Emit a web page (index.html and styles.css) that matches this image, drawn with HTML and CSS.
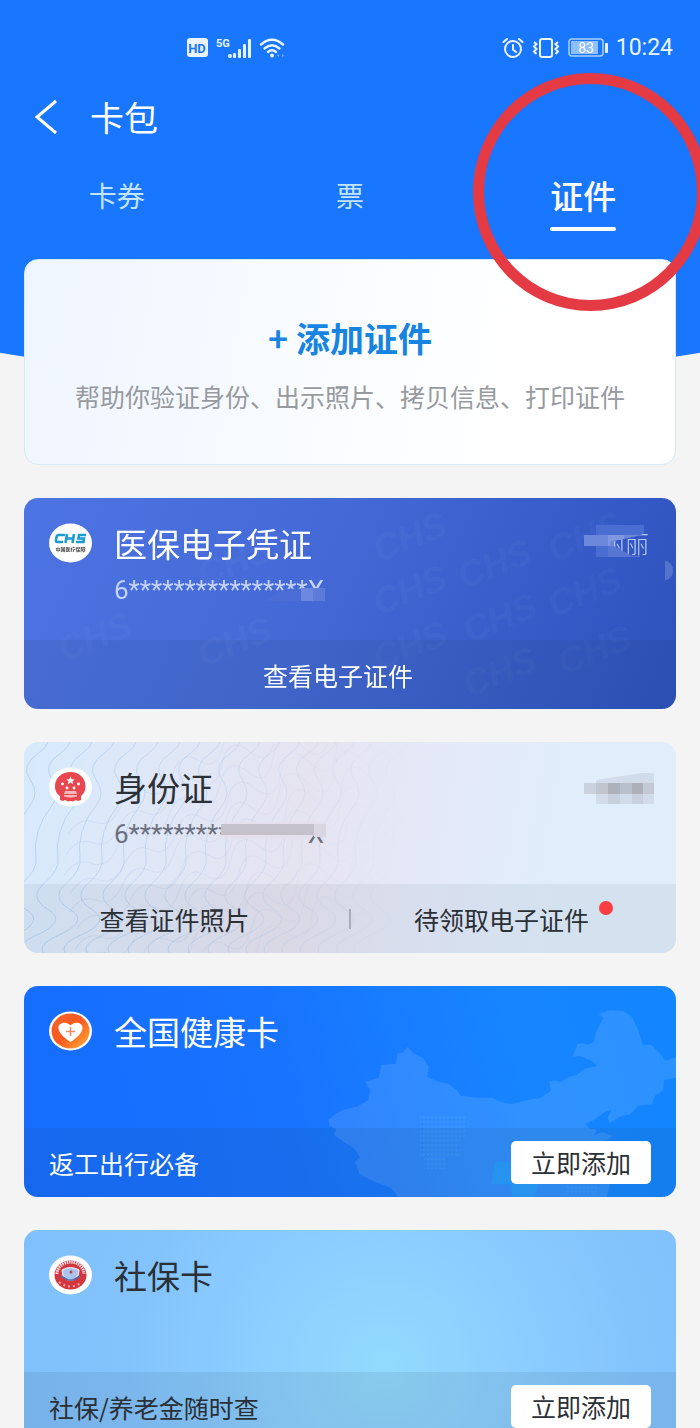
FILE: index.html
```html
<!DOCTYPE html>
<html lang="zh-CN">
<head>
    <meta charset="UTF-8">
    <meta name="viewport" content="width=device-width, initial-scale=1.0">
    <title>卡包</title>
    <link rel="stylesheet" href="styles.css">
</head>
<body>
<div class="page">

    <!-- Status bar -->
    <div class="status-bar">
        <div class="status-group">
            <svg width="22" height="20" viewBox="0 0 22 20">
                <rect x="0" y="0" width="21" height="19" rx="3" fill="#eaf4ff"/>
                <text x="10" y="15" class="hd-text" text-anchor="middle">HD</text>
            </svg>
            <svg width="36" height="22" viewBox="0 0 36 22">
                <text x="0" y="10" class="net-text">5G</text>
                <g fill="#e4f1ff">
                    <circle cx="14" cy="19" r="2"/>
                    <rect x="17" y="16" width="3" height="5" rx="1"/>
                    <rect x="22" y="12" width="3" height="9" rx="1"/>
                    <rect x="27" y="7" width="3" height="14" rx="1"/>
                    <rect x="32" y="2" width="3" height="19" rx="1"/>
                </g>
            </svg>
            <svg width="28" height="22" viewBox="0 0 28 22" fill="none" stroke="#eaf4ff" stroke-width="2.4" stroke-linecap="round">
                <path d="M2 7.500Q13 -2 24 7.500"/>
                <path d="M5.500 11.500Q13 5 20.500 11.500"/>
                <path d="M9 15Q13 11.500 17 15"/>
                <circle cx="13" cy="18.500" r="2" fill="#eaf4ff" stroke="none"/>
                <path d="M20 17l-2 1.500 2 1.500zM23 17l2 1.500-2 1.500z" fill="#7db5ff" stroke="none"/>
            </svg>
        </div>
        <div class="status-group">
            <svg width="22" height="22" viewBox="0 0 22 22" fill="none" stroke="#eaf4ff" stroke-width="2" stroke-linecap="round">
                <circle cx="11" cy="12" r="8"/>
                <path d="M11 8v4.500l3 2.500M1.500 5L5 2M20.500 5L17 2"/>
            </svg>
            <svg width="30" height="22" viewBox="0 0 30 22" fill="none" stroke="#eaf4ff" stroke-width="2">
                <rect x="9" y="2" width="12" height="18" rx="2"/>
                <path d="M3 5l2.500 2L3 9.500 5.500 12 3 14.500 5.500 17M27 5l-2.500 2L27 9.500 24.500 12l2.500 2.500-2.500 2.500"/>
            </svg>
            <svg width="41" height="20" viewBox="0 0 41 20">
                <rect x="1" y="1" width="34" height="17" rx="3" fill="none" stroke="#a9d0ff" stroke-width="1.500"/>
                <rect x="3" y="3" width="27" height="13" fill="#8fbfff"/>
                <rect x="37" y="5" width="3" height="10" rx="1" fill="#eaf4ff"/>
                <text x="18" y="15" class="battery-text" text-anchor="middle">83</text>
            </svg>
            <span class="clock">10:24</span>
        </div>
    </div>

    <!-- Title bar -->
    <header class="title-bar">
        <button class="back-btn" type="button" aria-label="返回">
            <svg width="24" height="36" viewBox="0 0 24 36" fill="none" stroke="#fff" stroke-width="3">
                <path d="M22 2L3 18l19 16"/>
            </svg>
        </button>
        <h1>卡包</h1>
    </header>

    <nav class="tabs">
        <button class="tab" type="button">卡券</button>
        <button class="tab" type="button">票</button>
        <button class="tab active" type="button">证件</button>
    </nav>

    <main class="card-list">

        <button class="add-card" type="button">
            <span class="add-title">+ 添加证件</span>
            <span class="add-desc">帮助你验证身份、出示照片、拷贝信息、打印证件</span>
        </button>

        <!-- Medical insurance -->
        <section class="card medical">
            <svg class="card-bg" viewBox="0 0 652 212" preserveAspectRatio="xMaxYMid slice" aria-hidden="true">
                <g class="watermark">
                    <text transform="translate(355 65) rotate(-22)">CHS</text>
                    <text transform="translate(440 92) rotate(-22)">CHS</text>
                    <text transform="translate(530 65) rotate(-22)">CHS</text>
                    <text transform="translate(355 118) rotate(-22)">CHS</text>
                    <text transform="translate(445 146) rotate(-22)">CHS</text>
                    <text transform="translate(530 120) rotate(-22)">CHS</text>
                    <text transform="translate(355 174) rotate(-22)">CHS</text>
                    <text transform="translate(445 200) rotate(-22)">CHS</text>
                    <text transform="translate(540 178) rotate(-22)">CHS</text>
                    <text transform="translate(180 90) rotate(-22)">CHS</text>
                    <text transform="translate(40 165) rotate(-22)">CHS</text>
                    <text transform="translate(180 170) rotate(-22)">CHS</text>
                </g>
                <path d="M641 63q8 2 8 10t-8 10z" fill="#fff" opacity=".18"/>
            </svg>
            <div class="card-body">
                <svg class="card-icon" width="43" height="40" viewBox="0 0 43 40">
                    <ellipse cx="21.500" cy="20" rx="21.500" ry="19.500" fill="#fff"/>
                    <g fill="none" stroke="#1c9bd0" stroke-width="2.600">
                        <path d="M16 12H9.500Q8 12 7.500 14L7 17Q6.500 19 8.500 19H14"/>
                        <path d="M18 11l-1.500 9M25 11l-1.500 9M17 15.500h8"/>
                        <path d="M37 12h-7l-.5 3.500h5.500l-.5 3.500H27"/>
                    </g>
                    <text x="21.500" y="28" class="chs-text" text-anchor="middle">中国医疗保障</text>
                </svg>
                <div class="card-info">
                    <h2>医保电子凭证</h2>
                    <div class="card-no">6****************X
                        <svg class="no-mask" width="64" height="16" viewBox="0 0 64 16">
                            <path d="M2 15L22 3l36-1v13z" fill="#4b6cd5"/>
                            <rect x="38" y="2" width="12" height="13" fill="#6c89df"/>
                            <rect x="50" y="2" width="12" height="13" fill="#5d7bd9"/>
                        </svg>
                    </div>
                </div>
                <div class="owner">丽丽
                    <svg class="owner-mask" width="70" height="34" viewBox="0 0 70 34">
                        <path d="M12 0h48v8l-3 2-17 4-10 1v17H12z" fill="#4a6dd1"/>
                        <path d="M24 18l24 13h8v1H24z" fill="#5876d3"/>
                        <path d="M0 10h57l-17 4-10 2v5H0z" fill="#6c88da"/>
                        <path d="M24 10h16v4l-14 2v5H24z" fill="#7f98e0"/>
                    </svg>
                </div>
            </div>
            <div class="card-footer">
                <button class="action" type="button">查看电子证件<span class="badge"></span></button>
            </div>
        </section>

        <!-- ID card -->
        <section class="card identity">
            <svg class="card-bg" viewBox="0 0 652 212" preserveAspectRatio="xMinYMid slice" aria-hidden="true">
                <defs>
                    <path id="wave" d="M30 -40q-22 12-10 26t-6 26-8 26 0 26-14 26-2 26-14 26 4 26-12 26 0 26"/>
                    <path id="ripple" d="M-20 0q18-12 30 0t30-4 30-2 30-6 30-2 30-6 30 0 30-4 30 2 30 0 30 4 30 0 30 4"/>
                    <linearGradient id="fade">
                        <stop offset="0" stop-color="#fff"/>
                        <stop offset=".3" stop-color="#fff" stop-opacity=".6"/>
                        <stop offset=".6" stop-color="#fff" stop-opacity="0"/>
                    </linearGradient>
                    <mask id="fadeMask" maskUnits="userSpaceOnUse" x="0" y="0" width="652" height="212">
                        <rect width="652" height="212" fill="url(#fade)"/>
                    </mask>
                </defs>
                <g mask="url(#fadeMask)" fill="none" stroke="#9fc3e8" stroke-width="1" opacity=".6">
                    <use href="#wave" x="0"/><use href="#wave" x="22"/><use href="#wave" x="44"/>
                    <use href="#wave" x="66"/><use href="#wave" x="88"/><use href="#wave" x="110"/>
                    <use href="#wave" x="132"/><use href="#wave" x="152"/><use href="#wave" x="172"/>
                    <use href="#wave" x="192"/><use href="#wave" x="212"/><use href="#wave" x="232"/>
                    <use href="#wave" x="252"/><use href="#wave" x="270"/><use href="#wave" x="288"/>
                    <use href="#wave" x="306"/><use href="#wave" x="324"/><use href="#wave" x="342"/>
                    <use href="#wave" x="360"/><use href="#wave" x="378"/>
                </g>
                <g mask="url(#fadeMask)" fill="none" stroke="#b0bfe4" stroke-width="1" opacity=".3">
                    <g transform="rotate(-24 200 100)">
                        <use href="#ripple" x="80" y="30"/><use href="#ripple" x="70" y="48"/>
                        <use href="#ripple" x="60" y="66"/><use href="#ripple" x="60" y="84"/>
                        <use href="#ripple" x="50" y="102"/><use href="#ripple" x="50" y="120"/>
                        <use href="#ripple" x="40" y="138"/><use href="#ripple" x="40" y="156"/>
                        <use href="#ripple" x="40" y="174"/><use href="#ripple" x="30" y="192"/>
                        <use href="#ripple" x="30" y="210"/><use href="#ripple" x="30" y="228"/>
                    </g>
                </g>
            </svg>
            <div class="card-body">
                <svg class="card-icon" width="43" height="40" viewBox="0 0 43 40">
                    <ellipse cx="21.500" cy="20" rx="21.500" ry="19.500" fill="#fff"/>
                    <path d="M21.500 5C30 5 36.500 11 36.500 19c0 5-2 8-4.500 10v4l-3 1-2-1-3 1.500-2.500-.5-2.500.5-3-1.500-2 1-3-1v-4c-3-2-5-5-5-10C6 11 13 5 21.500 5z" fill="#e8474f"/>
                    <path d="M21.500 9.500l1.200 2.700 3 .2-2.300 1.900.8 2.900-2.700-1.600-2.700 1.600.8-2.900-2.300-1.900 3-.2z" fill="#fff"/>
                    <g fill="#fff">
                        <circle cx="13.500" cy="17" r="1.400"/><circle cx="29.500" cy="17" r="1.400"/>
                        <circle cx="18" cy="21" r="1.400"/><circle cx="25" cy="21" r="1.400"/>
                    </g>
                    <path d="M16 24h11l1 3h-13zM15 28h13v1.500q-6.500 2-13 0z" fill="#f7b9bc"/>
                </svg>
                <div class="card-info">
                    <h2>身份证</h2>
                    <div class="card-no">6****************X
                        <svg class="id-mask" width="108" height="22" viewBox="0 0 108 22">
                            <path d="M7 0h100v13H95l-4 4H0V15L7 10z" fill="#e5e0ed"/>
                            <rect x="2" y="2" width="93" height="11" fill="#c4c0cc"/>
                            <rect x="95" y="2" width="12" height="13" fill="#dad6e1"/>
                        </svg>
                    </div>
                </div>
                <svg class="owner-pixels" width="70" height="34" viewBox="0 0 70 34">
                    <path d="M12 8l46-7h12v31H12z" fill="#d2dbe9"/>
                    <rect x="0" y="11" width="12" height="11" fill="#cbd2de"/>
                    <rect x="12" y="11" width="12" height="11" fill="#c0c5d0"/>
                    <rect x="24" y="11" width="12" height="11" fill="#adb1bc"/>
                    <rect x="36" y="11" width="12" height="11" fill="#bac0cb"/>
                    <rect x="48" y="11" width="11" height="11" fill="#adb0bb"/>
                    <rect x="59" y="11" width="11" height="11" fill="#c3cad6"/>
                    <rect x="24" y="22" width="12" height="10" fill="#c7cfdd"/>
                    <rect x="48" y="22" width="11" height="10" fill="#c9d1de"/>
                </svg>
            </div>
            <div class="card-footer">
                <button class="action" type="button">查看证件照片<span class="badge"></span></button>
                <span class="divider"></span>
                <button class="action" type="button">待领取电子证件<span class="badge dot"></span></button>
            </div>
        </section>

        <!-- Health card -->
        <section class="card health">
            <svg class="card-bg" viewBox="-858 33 1956 633" preserveAspectRatio="xMaxYMid slice" aria-hidden="true">
                <defs>
                    <pattern id="dots" width="12" height="14" patternUnits="userSpaceOnUse">
                        <circle cx="6" cy="7" r="4" fill="#4ba3ff"/>
                    </pattern>
                </defs>
                <path fill="#fff" opacity=".11" d="M55 435L75 418 100 404 140 395 175 375 180 345 165 320 206 308 214 270 258 266 262 236 280 232 292 216 312 236 340 250 356 275 352 306 385 320 415 326 440 345 452 362 500 368 545 368 575 382 605 388 650 375 690 370 722 348 718 320 735 316 752 322 775 306 800 300 822 282 862 272 845 258 810 242 788 246 802 208 820 204 832 210 852 200 858 170 880 130 866 116 900 106 940 108 965 125 985 165 998 210 1025 210 1055 240 1065 258 1098 246V308L1062 314 1060 345 1035 362 1025 388 985 392 960 418 930 425 900 444 892 430 905 405 885 410 850 436 826 446 838 460 860 464 852 482 875 472 910 482 890 495 862 500 880 520 900 560 908 600 890 666H265L245 640 200 622 150 600 135 560 150 545 130 518 100 500 72 480 78 462 58 452z"/>
                <path d="M330 418h138v70h-20v60h-40v35h-65v-40h-13z" fill="url(#dots)" opacity=".35"/>
                <path d="M555 560h50v66h80l-10 40h-70v-38h-62z" fill="#22a6ff" opacity=".6"/>
                <path d="M770 630h90v30h-90z" fill="url(#dots)" opacity=".35"/>
            </svg>
            <div class="card-body">
                <svg class="card-icon" width="43" height="40" viewBox="0 0 43 40">
                    <defs>
                        <linearGradient id="orange" x1="0" y1="0" x2="1" y2="1">
                            <stop offset="0" stop-color="#f2622f"/>
                            <stop offset=".5" stop-color="#fb5a1e"/>
                            <stop offset="1" stop-color="#ffb13b"/>
                        </linearGradient>
                    </defs>
                    <ellipse cx="21.500" cy="20" rx="21.500" ry="19.500" fill="#fff"/>
                    <ellipse cx="21.500" cy="20" rx="19" ry="17.500" fill="url(#orange)"/>
                    <path d="M21.500 31C14 26 9 21 9.500 16c.5-4.500 8-6 12-1.500 4-4.500 11.500-3 12 1.500.5 5-4.500 10-12 15z" fill="#fff"/>
                    <path d="M21.500 16v9M17 20.500h9" stroke="#f08a62" stroke-width="1.500"/>
                </svg>
                <div class="card-info">
                    <h2>全国健康卡</h2>
                </div>
            </div>
            <div class="card-footer promo">
                <span>返工出行必备</span>
                <button class="add-btn" type="button">立即添加</button>
            </div>
        </section>

        <!-- Social security -->
        <section class="card social">
            <div class="card-body">
                <svg class="card-icon" width="43" height="40" viewBox="0 0 43 40">
                    <ellipse cx="21.500" cy="20" rx="21.500" ry="19.500" fill="#fff"/>
                    <ellipse cx="21.500" cy="20" rx="16" ry="14.500" fill="#d4363f"/>
                    <path d="M8 19a13.500 12 0 0 1 27 0" fill="none" stroke="#fbe3e5" stroke-width="3" stroke-dasharray="1.500 .8"/>
                    <ellipse cx="21.500" cy="19" rx="10" ry="8" fill="#d4363f"/>
                    <path d="M13 15q8.500-5 17 0l-1 6q-3 1-4 4h-7q-1-3-4-4z" fill="#a9c4ee" stroke="#fff" stroke-width="1"/>
                    <path d="M12 21l7 4h5l7-4" fill="none" stroke="#4f6cab" stroke-width="1.500"/>
                    <circle cx="22" cy="17" r="1.500" fill="#d4363f"/>
                    <path d="M10 27q11.500 9 23 0" fill="none" stroke="#f3a9ad" stroke-width="2" stroke-dasharray="2 3"/>
                </svg>
                <div class="card-info">
                    <h2>社保卡</h2>
                </div>
            </div>
            <div class="card-footer promo">
                <span>社保/养老金随时查</span>
                <button class="add-btn" type="button">立即添加</button>
            </div>
        </section>

    </main>

    <!-- Red circle around the active tab -->
    <div class="highlight-ring"></div>
</div>
</body>
</html>
```
FILE: styles.css
```css
* {
    box-sizing: border-box;
}

body {
    margin: 0;
    background-color: #f4f4f4;
    color: #2b2f36;
    font-family: "Noto Sans CJK SC", sans-serif;
}

button {
    border: none;
    padding: 0;
    background: none;
    color: inherit;
    font-family: inherit;
    cursor: pointer;
}

.page {
    position: relative;
    height: 100vh;
    overflow: hidden;
}

/* Blue backdrop with a curved bottom edge */
.page::before {
    content: "";
    position: absolute;
    top: 0;
    left: 0;
    right: 0;
    height: 384px;
    background-color: #1976ff;
    clip-path: circle(2100px at 50% -1718px);
    z-index: -1;
}

/* Status bar */
.status-bar {
    display: flex;
    justify-content: space-between;
    align-items: center;
    height: 94px;
    padding: 2px 27px 0 187px;
}

.status-group {
    display: flex;
    align-items: center;
    gap: 7px;
}

.hd-text {
    font: bold 13px Roboto, sans-serif;
    fill: #1976ff;
}

.net-text {
    font: bold 11px Roboto, sans-serif;
    fill: #eaf4ff;
}

.battery-text {
    font: 14px Roboto, sans-serif;
    fill: #fff;
}

.clock {
    color: #eaf4ff;
    font-family: Roboto, sans-serif;
    font-size: 23px;
    line-height: 28px;
}

/* Title bar */
.title-bar {
    display: flex;
    align-items: center;
    gap: 32px;
    height: 46px;
    padding-left: 34px;
    color: #fff;
}

.back-btn svg {
    display: block;
}

h1,
h2 {
    margin: 0;
    font-weight: 400;
    font-size: 33px;
    line-height: 40px;
}

h1 {
    font-size: 34px;
}

/* Tabs */
.tabs {
    display: grid;
    grid-template-columns: repeat(3, 1fr);
    align-items: start;
    margin: 28px 0;
    height: 63px;
}

.tab {
    color: #c3e4ff;
    font-size: 28px;
    line-height: 54px;
}

.tab.active {
    color: #fff;
    font-size: 33px;
    font-weight: 500;
}

.tab.active::after {
    content: "";
    display: block;
    width: 66px;
    height: 4px;
    margin: 5px auto 0;
    border-radius: 2px;
    background-color: #fff;
}

.card-list {
    display: flex;
    flex-direction: column;
    gap: 33px;
    padding: 0 24px;
}

/* Add card */
.add-card {
    display: flex;
    flex-direction: column;
    align-items: center;
    gap: 15px;
    padding: 53px 20px 50px;
    border: 1px solid #d3eaf8;
    border-radius: 14px;
    background: linear-gradient(100deg, #eff5ff, #fafcff 50%, #fff 75%);
}

.add-title {
    color: #1684e0;
    font-size: 34px;
    font-weight: 700;
    line-height: 50px;
}

.add-desc {
    color: #979a9e;
    font-size: 25px;
    line-height: 36px;
}

/* Cards */
.card {
    position: relative;
    flex-shrink: 0;
    border-radius: 14px;
    overflow: hidden;
}

.card-bg {
    position: absolute;
    top: 0;
    left: 0;
    width: 100%;
    height: 100%;
}

.card-body {
    position: relative;
    display: flex;
    align-items: flex-start;
    gap: 22px;
    height: 142px;
    padding: 25px 25px 0;
}

.card-info {
    flex: 1;
}

.card-no {
    position: relative;
    width: max-content;
    margin-top: 12px;
    font-family: Roboto, sans-serif;
    font-size: 26px;
    line-height: 30px;
}

.owner {
    position: relative;
    padding-right: 2px;
    color: #b9cbf6;
    font-size: 24px;
    font-weight: 300;
    line-height: 40px;
}

.card-footer {
    position: relative;
    display: flex;
    align-items: center;
    height: 69px;
    background-color: rgba(30, 50, 70, 0.09);
    font-size: 25px;
}

.action {
    flex: 1;
    display: flex;
    justify-content: center;
    font-size: 25px;
    line-height: 36px;
}

.badge {
    width: 14px;
    height: 14px;
    margin-left: 10px;
}

.badge.dot {
    border-radius: 50%;
    background-color: #fa3e43;
}

.divider {
    width: 2px;
    height: 20px;
    background-color: #a9adb9;
}

.promo {
    justify-content: space-between;
    padding: 0 25px;
}

.add-btn {
    width: 140px;
    height: 43px;
    border-radius: 5px;
    background-color: #fff;
    color: #2b2f36;
    font-size: 25px;
    line-height: 43px;
}

/* Card themes */
.medical {
    background: linear-gradient(115deg, #4d74e3, #4469d6 45%, #2c51bd);
    color: #fff;
}

.medical .card-no {
    color: #c4d3fa;
}

.watermark {
    fill: #fff;
    opacity: 0.03;
    font: italic bold 36px "Liberation Sans", sans-serif;
}

.chs-text {
    fill: #444;
    font: bold 5px "Noto Sans CJK SC", sans-serif;
}

.identity {
    background: linear-gradient(100deg, #d6eafc, #dfe7f7 20%, #e6e3f0 42%, #e4e9f9 62%, #e0edfb 82%);
}

.identity .card-no {
    color: #6b7080;
}

.identity .card-footer {
    background-color: rgba(30, 50, 70, 0.06);
}

.health {
    background: linear-gradient(75deg, #156cff, #1873fe 40%, #1785ff 75%, #1285ff);
    color: #fff;
}

.social {
    background: radial-gradient(circle at 55% 65%, #92dafd, #8dcfff 30%, #84c4fd 65%, #7fbffb);
}

/* Mosaic patches over the private data */
.no-mask {
    position: absolute;
    right: -3px;
    bottom: 3px;
}

.id-mask {
    position: absolute;
    right: -3px;
    top: 3px;
}

.owner-mask {
    position: absolute;
    right: -3px;
    top: 2px;
}

.owner-pixels {
    margin: 5px -3px 0 0;
}

/* Marker ring */
.highlight-ring {
    position: absolute;
    top: 73px;
    right: -8px;
    width: 235px;
    height: 238px;
    border: 11px solid #e33a44;
    border-radius: 50%;
    pointer-events: none;
}
```
